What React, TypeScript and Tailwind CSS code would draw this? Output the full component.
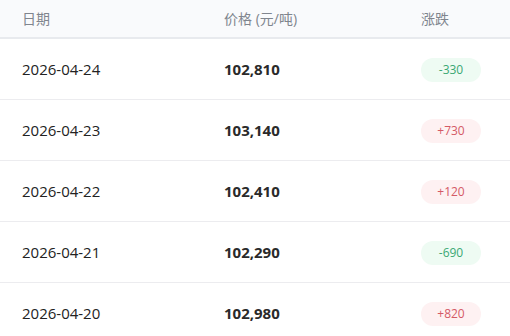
const rows = [
  { date: "2026-04-24", price: "102,810", change: "-330", up: false },
  { date: "2026-04-23", price: "103,140", change: "+730", up: true },
  { date: "2026-04-22", price: "102,410", change: "+120", up: true },
  { date: "2026-04-21", price: "102,290", change: "-690", up: false },
  { date: "2026-04-20", price: "102,980", change: "+820", up: true },
];

export default function App() {
  return (
    <div
      className="w-[510px] h-[336px] overflow-hidden bg-white"
      style={{ fontFamily: '"Open Sans", "Noto Sans CJK SC", sans-serif' }}
    >
      {/* Header */}
      <div className="grid grid-cols-[202px_197px_1fr] h-[39px] items-center pl-[22px] bg-[#f9fafc] border-b-2 border-[#e8eaee] text-[14px] text-[#80858e]">
        <span>日期</span>
        <span>价格 (元/吨)</span>
        <span>涨跌</span>
      </div>

      {rows.map((r) => (
        <div
          key={r.date}
          className="grid grid-cols-[202px_197px_1fr] h-[61px] items-center pl-[22px] border-b border-[#ececef]"
        >
          <span className="text-[15px] text-[#222]">{r.date}</span>
          <span className="text-[15px] font-bold text-[#2a2a2a]">{r.price}</span>
          <span>
            <span
              className={`inline-flex w-[60px] h-[24px] items-center justify-center rounded-full text-[12px] ${
                r.up ? "bg-[#fef1f2] text-[#d45a66]" : "bg-[#eefbf3] text-[#3aa873]"
              }`}
            >
              {r.change}
            </span>
          </span>
        </div>
      ))}
    </div>
  );
}
